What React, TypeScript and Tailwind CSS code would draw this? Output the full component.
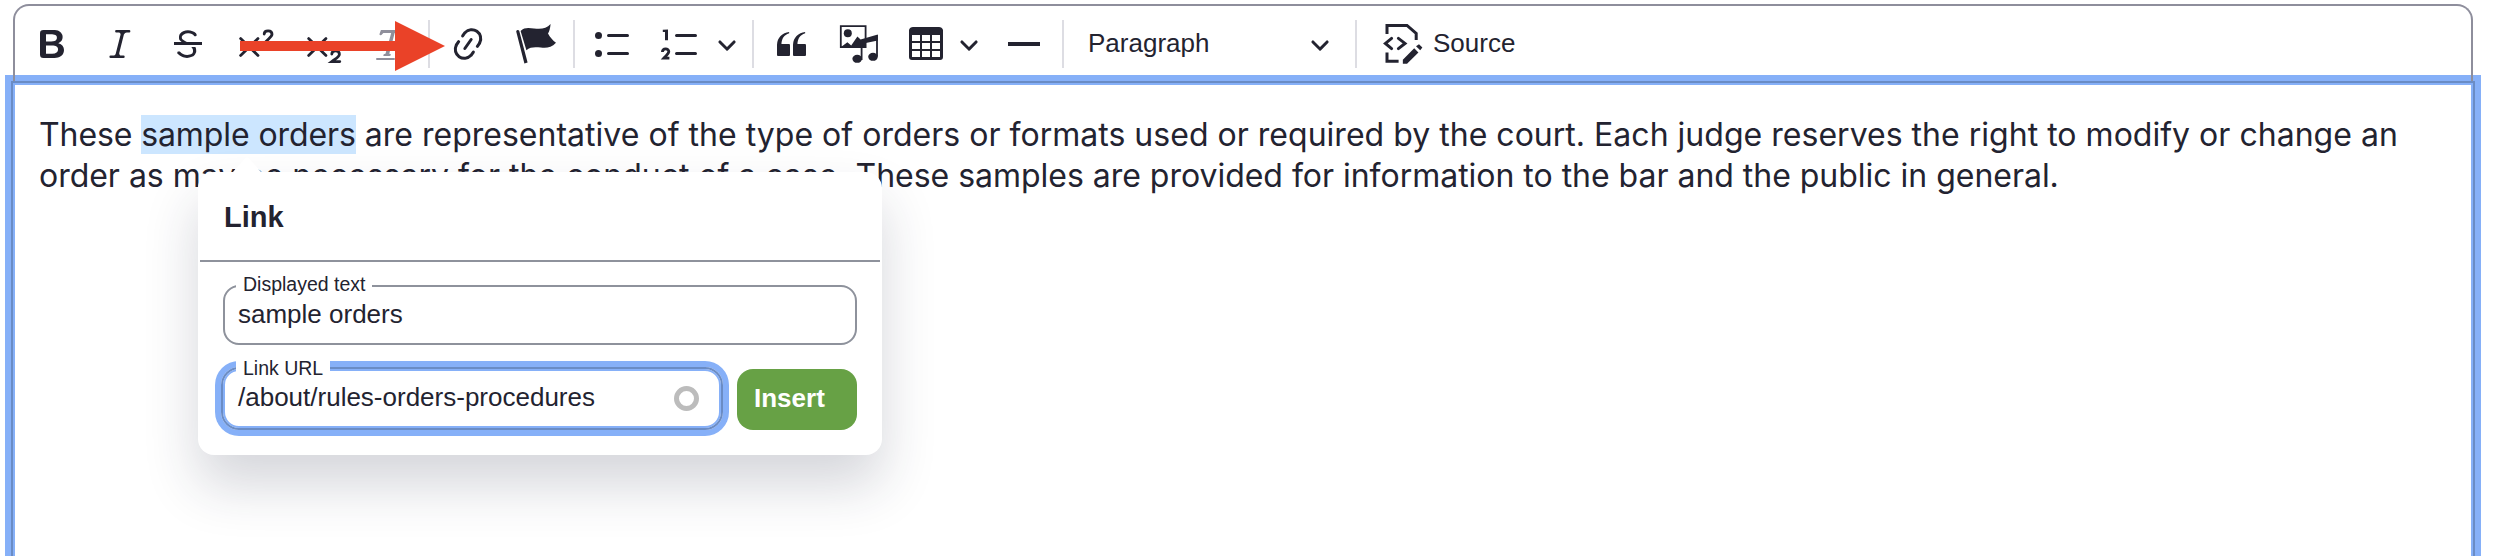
import type { ReactNode } from "react";

const INK = "#232330";

function Icon({ children, className = "" }: { children: ReactNode; className?: string }) {
  return (
    <svg viewBox="0 0 20 20" fill={INK} className={`h-10 w-10 shrink-0 overflow-visible ${className}`}>
      {children}
    </svg>
  );
}

function Chevron({ className = "" }: { className?: string }) {
  return (
    <svg viewBox="0 0 10 10" fill={INK} className={`h-5 w-5 shrink-0 ${className}`}>
      <path d="M.941 4.523a.75.75 0 1 1 1.06-1.06l3.006 3.005 3.005-3.005a.75.75 0 1 1 1.06 1.06l-3.549 3.55a.75.75 0 0 1-1.168-.136L.941 4.523z" />
    </svg>
  );
}

function Separator({ className = "" }: { className?: string }) {
  return <div className={`h-12 w-0.5 shrink-0 bg-[#dddde3] ${className}`} />;
}

function Toolbar() {
  return (
    <div className="relative flex h-[77px] items-center rounded-t-2xl border-2 border-b-0 border-[#8e8e9c] pl-[17px] pb-px pt-1.5">
      <Icon className="-mt-1">
        <path d="M10.187 17H5.773c-.637 0-1.092-.138-1.364-.415-.273-.277-.409-.718-.409-1.323V4.738c0-.617.14-1.062.419-1.332.279-.27.73-.406 1.354-.406h4.68c.69 0 1.288.041 1.793.124.506.083.96.242 1.36.478.341.197.644.447.906.75a3.262 3.262 0 0 1 .808 2.162c0 1.401-.722 2.426-2.167 3.075C15.05 10.175 16 11.315 16 13.01a3.756 3.756 0 0 1-2.296 3.504 6.1 6.1 0 0 1-1.517.377c-.571.073-1.238.11-2 .11zm-.217-6.217H7v4.087h3.069c1.977 0 2.965-.69 2.965-2.072 0-.707-.256-1.22-.768-1.537-.512-.319-1.277-.478-2.296-.478zM7 5.13v3.619h2.606c.729 0 1.292-.067 1.69-.2a1.6 1.6 0 0 0 .91-.765c.165-.267.247-.566.247-.897 0-.707-.26-1.176-.778-1.409-.519-.232-1.31-.348-2.375-.348H7z" />
      </Icon>
      <Icon className="-mt-1 ml-7">
        <path d="m9.586 14.633.021.004c-.036.335.095.655.393.962.082.083.173.15.274.201h1.474a.6.6 0 1 1 0 1.2H5.304a.6.6 0 0 1 0-1.2h1.15c.474-.07.809-.182 1.005-.334.157-.122.291-.32.404-.597l2.416-9.55a1.053 1.053 0 0 0-.281-.823 1.12 1.12 0 0 0-.442-.296H8.15a.6.6 0 0 1 0-1.2h6.443a.6.6 0 1 1 0 1.2h-1.195c-.376.056-.65.155-.823.296-.215.175-.423.439-.623.79l-2.366 9.347z" />
      </Icon>
      <Icon className="-mt-1 ml-7">
        <path d="M7 16.4c-.8-.4-1.5-.9-2.2-1.5a.6.6 0 0 1-.2-.5l.3-.6h1c1 1.2 2.1 1.7 3.7 1.7 1 0 1.8-.3 2.3-.6.6-.4.6-1.2.6-1.3.2-1.2-.9-2.1-.9-2.1h2.1c.3.7.4 1.2.4 1.7v.8l-.6 1.2c-.6.8-1.1 1-1.6 1.2a6 6 0 0 1-2.4.6c-1 0-1.8-.3-2.5-.6zM6.8 9 6 8.3c-.4-.5-.5-.8-.5-1.6 0-.7.1-1.3.5-1.8.4-.6 1-1 1.6-1.3a6.3 6.3 0 0 1 4.7 0 4 4 0 0 1 1.7 1l.3.7c0 .1.2.4-.2.7-.4.2-.9.1-1 0a3 3 0 0 0-1.2-1c-.4-.2-1-.3-2-.4-.7 0-1.4.2-2 .6-.8.6-1 .8-1 1.5 0 .8.5 1 1.2 1.5.6.4 1.1.7 1.9 1H6.8z" />
        <path d="M3 10.5V9h14v1.5z" />
      </Icon>
      <Icon className="-mt-1 ml-7">
        <g fill="none" stroke={INK} strokeWidth="1.4" strokeLinecap="round">
          <path d="M2.300 7.300 11 15.700M11 7.300l-8.700 8.400" />
          <path d="M14.100 5c.1-2.100 3.900-2.100 3.900.1 0 1.200-1.500 1.900-3.700 4.400H18" />
        </g>
      </Icon>
      <Icon className="-mt-1 ml-7">
        <g fill="none" stroke={INK} strokeWidth="1.4" strokeLinecap="round">
          <path d="M2.300 7.300 11 15.700M11 7.300l-8.700 8.400" />
          <path d="M13.900 15c.1-2.100 3.800-2.100 3.800.1 0 1.200-1.400 1.900-3.800 3.700h4" />
        </g>
      </Icon>
      <Icon className="-mt-1 ml-7">
        <path
          fill="#8f8f9b"
          d="M8.69 14.915c.053.052.173.083.36.093a.366.366 0 0 1 .345.485l-.003.01a.738.738 0 0 1-.697.497h-2.67a.374.374 0 0 1-.353-.496l.013-.038a.681.681 0 0 1 .644-.458c.197-.012.325-.043.386-.093a.28.28 0 0 0 .072-.11L9.592 4.5H6.269c-.359-.017-.609.013-.75.09-.142.078-.289.265-.442.563-.192.29-.516.464-.864.464H4.17a.43.43 0 0 1-.407-.569L4.46 3h13.08l-.62 2.043a.81.81 0 0 1-.775.574h-.114a.486.486 0 0 1-.486-.486c.001-.284-.054-.464-.167-.54-.112-.076-.367-.106-.766-.091h-3.28l-2.68 10.257c-.006.074.007.127.038.158zM2.500 17h8.500a.5.5 0 1 1 0 1H2.500a.5.5 0 1 1 0-1z"
        />
      </Icon>
      <Separator className="-mt-1 ml-4" />
      <Icon className="-mt-1 ml-[18px]">
        <path d="m11.077 15 .991-1.416a.75.75 0 1 1 1.229.86l-1.148 1.64a.748.748 0 0 1-.217.206 5.251 5.251 0 0 1-8.503-5.955.741.741 0 0 1 .12-.274l1.147-1.639a.75.75 0 1 1 1.228.86L4.933 10.7l.006.003a3.75 3.75 0 0 0 6.132 4.294l.006.004zm5.494-5.335a.748.748 0 0 1-.12.274l-1.147 1.639a.75.75 0 1 1-1.228-.86l.86-1.23a3.75 3.75 0 0 0-6.144-4.301l-.86 1.229a.75.75 0 0 1-1.229-.86l1.148-1.64a.748.748 0 0 1 .217-.206 5.251 5.251 0 0 1 8.503 5.955zm-4.563-2.532a.75.75 0 0 1 .184 1.045l-3.155 4.505a.75.75 0 1 1-1.229-.86l3.155-4.506a.75.75 0 0 1 1.045-.184z" />
      </Icon>
      <Icon className="-mt-1 ml-7">
        <path d="M.1 3.700a.8.8 0 0 1 1.500-.3l4.200 15.900-1.600.5z" />
        <path d="M2.300 3.500C4.300 1.400 6.700 2 9 2.200c3.300.5 6.200.2 8.300-2.200-.2 2.300-.6 3.600-1.300 4.700 1.200 2.200 2.400 3.400 4 4.700-2.300 2.400-4.700 2.800-7.600 2.400-2.500-.3-5.200-.5-7.200 1.300z" />
      </Icon>
      <Separator className="-mt-1 ml-[17px]" />
      <Icon className="-mt-1 ml-[18px]">
        <path d="M7 5.75c0 .414.336.75.75.75h9.5a.75.75 0 1 0 0-1.5h-9.5a.75.75 0 0 0-.75.75zM7 14.750c0 .414.336.75.75.75h9.500a.75.75 0 1 0 0-1.500h-9.500a.75.75 0 0 0-.75.75z" />
        <circle cx="2.75" cy="5.75" r="1.75" />
        <circle cx="2.75" cy="14.75" r="1.75" />
      </Icon>
      <Icon className="-mt-1 ml-7">
        <path d="M7 5.75c0 .414.336.75.75.75h9.5a.75.75 0 1 0 0-1.5h-9.5a.75.75 0 0 0-.75.75zM7 14.750c0 .414.336.75.75.75h9.500a.75.75 0 1 0 0-1.500h-9.500a.75.75 0 0 0-.75.75z" />
        <path d="M3.500 2.700v5.400H2V4H.9V2.900z" />
        <path d="M.7 14c.1-2.100 3.200-2 3.200-.2 0 1.100-1.300 1.900-2.500 3.300h2.800" fill="none" stroke={INK} strokeWidth="1.4" />
      </Icon>
      <Chevron className="-mt-1 ml-4" />
      <Separator className="-mt-1 ml-[15px]" />
      <Icon className="-mt-1 ml-[17px]">
        <path d="M3 10.423a6.5 6.5 0 0 1 6.056-6.408l.038.67C6.448 5.423 5.354 7.663 5.22 10H9c.552 0 .5.432.5.986v4.511c0 .554-.448.503-1 .503h-5c-.552 0-.5-.449-.5-1.003v-4.574zm8 0a6.5 6.5 0 0 1 6.056-6.408l.038.67c-2.646.739-3.74 2.979-3.873 5.315H17c.552 0 .5.432.5.986v4.511c0 .554-.448.503-1 .503h-5c-.552 0-.5-.449-.5-1.003v-4.574z" />
      </Icon>
      <Icon className="-mt-1 ml-7">
        <path d="M.9 1.100h12.400v10.500H.9z" fill="none" stroke={INK} strokeWidth=".9" />
        <circle cx="4.400" cy="4.600" r="2" />
        <path d="M1 11.500 4.200 9.100 6.100 10.700 9.200 6.300l1.600 1.400 8.600-2.500v3.100l-6 1.200v2.100H1z" />
        <path d="M11.300 9.500v8.500M19 5.500v10.800" stroke={INK} strokeWidth=".9" />
        <ellipse cx="9.100" cy="17.400" rx="2.400" ry="2" />
        <ellipse cx="17" cy="16.400" rx="2.400" ry="2" />
      </Icon>
      <Icon className="-mt-1 ml-[27px]">
        <path d="M3 5.5v3h4v-3H3zm0 4v3h4v-3H3zm0 4v3h4v-3H3zm5 3h4v-3H8v3zm5 0h4v-3h-4v3zm4-4v-3h-4v3h4zm0-4v-3h-4v3h4zm1.5 8A1.5 1.5 0 0 1 17 18H3a1.5 1.5 0 0 1-1.5-1.5V3c.222-.863 1.068-1.5 2-1.5h13c.932 0 1.778.637 2 1.5v13.5zM12 12.5v-3H8v3h4zm0-4v-3H8v3h4z" />
      </Icon>
      <Chevron className="-mt-1 ml-[13px]" />
      <Icon className="-mt-1 ml-[25px]">
        <path d="M2 9h16v2H2z" />
      </Icon>
      <Separator className="-mt-1 ml-[18px]" />
      <span className="-mt-1.5 ml-6 w-[222px] text-[26px] leading-10">Paragraph</span>
      <Chevron className="-mt-1" />
      <Separator className="-mt-1 ml-[25px]" />
      <Icon className="-mt-1 ml-[26px]">
        <path d="M2 5V.700h10l4.600 4V8M2 14.300v4.300h5.800" fill="none" stroke={INK} strokeWidth="1.5" />
        <path d="M4.300 7.200 1.200 9.700l3.100 2.600M7.700 7.200 11 9.700l-3.300 2.600" fill="none" stroke={INK} strokeWidth="1.500" strokeLinecap="round" />
        <path d="m15.600 12.100 2.122 2.122-5.700 5.700h-2.100v-2.100zM18 10.100l1.700 1.700-1.100 1.300-2.100-2z" />
      </Icon>
      <span className="-mt-1.5 ml-2.5 text-[26px] leading-10">Source</span>

      <svg viewBox="0 0 206 50" className="absolute left-[225px] top-[15px] h-[50px] w-[206px]">
        <path d="M0 20h155V0l50 25-50 25V30H0z" fill="#ea4228" />
      </svg>
    </div>
  );
}

function LinkPanel() {
  return (
    <div className="absolute left-[198px] top-[172px] h-[283px] w-[684px] rounded-2xl bg-white px-0.5 text-[26px] shadow-[0_30px_54px_rgba(34,35,62,0.19)]">
      <svg viewBox="0 0 30 16" className="absolute -top-[15px] left-[34px] h-4 w-[30px]">
        <path d="M0 16 13.500 1q1.500-1.500 3 0L30 16z" fill="#fff" />
      </svg>
      <h2 className="h-[90px] border-b-2 border-[#8e929c] pl-6 pt-[27px] text-[29px] leading-[36px] font-bold">Link</h2>
      <div className="px-[23px] pt-[23px]">
        <div className="relative h-[60px] rounded-2xl border-2 border-[#8e929c] pl-[13px] pt-3 leading-[30px]">
          <label className="absolute -top-[17px] left-[11px] bg-white px-[7px] text-[19.5px] leading-7">Displayed text</label>
          sample orders
        </div>
        <div className="mt-[22px] flex gap-3.5">
          <div className="relative -ml-0.5 h-[63px] w-[502px] rounded-[18px] border-2 border-[#6a8cc5] pl-[15px] pt-[13px] leading-[30px] shadow-[0_0_0_6px_#86b0f8,inset_0_0_0_2px_#86b0f8]">
            <label className="absolute -top-[17px] left-[13px] bg-white px-[7px] text-[19.5px] leading-8">Link URL</label>
            /about/rules-orders-procedures
            <span className="absolute right-[22px] top-[17px] h-[25px] w-[25px] rounded-full border-[5px] border-[#bcbcbc]" />
          </div>
          <button className="mt-0.5 h-[61px] w-[120px] rounded-2xl bg-[#67a145] pb-0.5 pl-[17px] text-left font-bold text-white">Insert</button>
        </div>
      </div>
    </div>
  );
}

export default function App() {
  return (
    <main className="relative h-[556px] w-[2498px] overflow-hidden bg-white pl-[13px] pr-[25px] pt-1 font-['Liberation_Sans',sans-serif] text-[#232330]">
      <Toolbar />
      <div className="-ml-0.5 h-[600px] w-[2464px] border-2 border-[#6a8cc5] pl-[26px] pt-[31px] font-['Inter',sans-serif] text-[32px] leading-[41px] shadow-[0_0_0_6px_#86b0f8,inset_0_0_0_2px_#86b0f8]">
        <p className="whitespace-nowrap">
          <span className="tracking-[-0.1px]">
            These <mark className="bg-[#cce6ff] text-inherit">sample orders</mark>
          </span>
          <span className="tracking-[0.02px]">
            {" "}
            are representative of the type of orders or formats used or required by the court. Each judge reserves the right
            to modify or change an
          </span>
        </p>
        <p className="whitespace-nowrap tracking-[-0.02px]">
          order as may be necessary for the conduct of a case. These samples are provided for information to the bar and the
          public in general.
        </p>
      </div>
      <LinkPanel />
    </main>
  );
}
